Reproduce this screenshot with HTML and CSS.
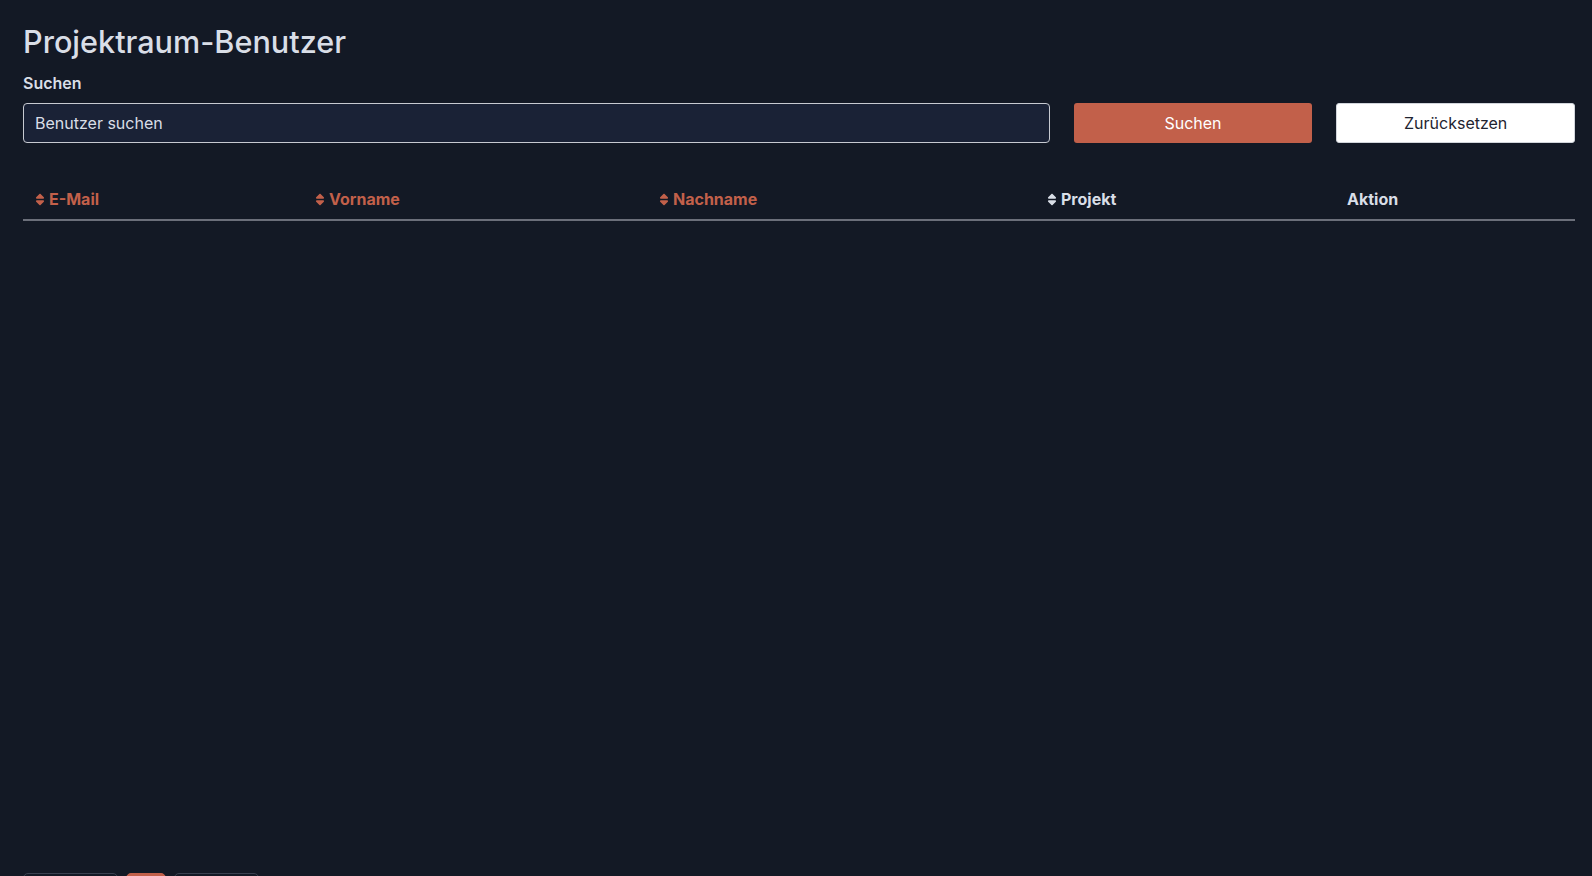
FILE: index.html
```html
<!DOCTYPE html>
<html lang="de">
<head>
<meta charset="utf-8">
<title>Projektraum-Benutzer</title>
<link rel="stylesheet" href="styles.css">
</head>
<body>
<div class="page">
  <h1 class="title">Projektraum-Benutzer</h1>
  <label class="label" for="q">Suchen</label>
  <div class="search">
    <input id="q" class="input" type="text" value="Benutzer suchen">
    <button class="btn btn-primary">Suchen</button>
    <button class="btn btn-light">Zurücksetzen</button>
  </div>
  <div class="table-wrap">
    <table class="table">
      <colgroup>
        <col class="c1"><col class="c2"><col class="c3"><col class="c4"><col class="c5">
      </colgroup>
      <thead>
        <tr>
          <th class="sortable active"><svg class="sort" viewBox="0 0 320 512"><path d="M137.4 41.4c12.5-12.5 32.8-12.5 45.3 0l128 128c9.2 9.2 11.9 22.9 6.9 34.9S301 224 288 224H32c-12.9 0-24.6-7.8-29.6-19.8s-2.2-25.7 6.9-34.9l128-128zm0 429.3l-128-128c-9.2-9.2-11.9-22.9-6.9-34.9S19.1 288 32.1 288h256c12.9 0 24.6 7.8 29.6 19.8s2.2 25.7-6.9 34.9l-128 128c-12.5 12.5-32.8 12.5-45.3 0z"/></svg>E-Mail</th>
          <th class="sortable active"><svg class="sort" viewBox="0 0 320 512"><path d="M137.4 41.4c12.5-12.5 32.8-12.5 45.3 0l128 128c9.2 9.2 11.9 22.9 6.9 34.9S301 224 288 224H32c-12.9 0-24.6-7.8-29.6-19.8s-2.2-25.7 6.9-34.9l128-128zm0 429.3l-128-128c-9.2-9.2-11.9-22.9-6.9-34.9S19.1 288 32.1 288h256c12.9 0 24.6 7.8 29.6 19.8s2.2 25.7-6.9 34.9l-128 128c-12.5 12.5-32.8 12.5-45.3 0z"/></svg>Vorname</th>
          <th class="sortable active"><svg class="sort" viewBox="0 0 320 512"><path d="M137.4 41.4c12.5-12.5 32.8-12.5 45.3 0l128 128c9.2 9.2 11.9 22.9 6.9 34.9S301 224 288 224H32c-12.9 0-24.6-7.8-29.6-19.8s-2.2-25.7 6.9-34.9l128-128zm0 429.3l-128-128c-9.2-9.2-11.9-22.9-6.9-34.9S19.1 288 32.1 288h256c12.9 0 24.6 7.8 29.6 19.8s2.2 25.7-6.9 34.9l-128 128c-12.5 12.5-32.8 12.5-45.3 0z"/></svg>Nachname</th>
          <th class="sortable"><svg class="sort" viewBox="0 0 320 512"><path d="M137.4 41.4c12.5-12.5 32.8-12.5 45.3 0l128 128c9.2 9.2 11.9 22.9 6.9 34.9S301 224 288 224H32c-12.9 0-24.6-7.8-29.6-19.8s-2.2-25.7 6.9-34.9l128-128zm0 429.3l-128-128c-9.2-9.2-11.9-22.9-6.9-34.9S19.1 288 32.1 288h256c12.9 0 24.6 7.8 29.6 19.8s2.2 25.7-6.9 34.9l-128 128c-12.5 12.5-32.8 12.5-45.3 0z"/></svg>Projekt</th>
          <th>Aktion</th>
        </tr>
      </thead>
      <tbody></tbody>
    </table>
  </div>
  <div class="pager">
    <button class="pg pg-wide">Zurück</button>
    <button class="pg pg-current">1</button>
    <button class="pg pg-wide2">Weiter</button>
  </div>
</div>
</body>
</html>
```

FILE: styles.css
```css
html, body {
  margin: 0;
  padding: 0;
  background: #131925;
  height: 100%;
  overflow: hidden;
}
body {
  font-family: Inter, "Noto Sans", sans-serif;
  color: #d9dee7;
}
.page {
  padding: 22px 17px 0 23px;
}
.title {
  margin: 0;
  font-size: 30.6px;
  line-height: 40px;
  font-weight: 500;
  color: #d9dee7;
  letter-spacing: 0;
}
.label {
  display: block;
  margin-top: 9px;
  font-size: 16px;
  line-height: 24px;
  font-weight: 600;
  color: #d9dee7;
}
.search {
  margin-top: 8px;
  display: grid;
  grid-template-columns: repeat(6, 1fr);
  column-gap: 24px;
}
.input {
  grid-column: span 4;
  box-sizing: border-box;
  height: 40px;
  background: #1a2236;
  border: 1px solid #c7cad1;
  border-radius: 4px;
  padding: 0 11px;
  color: #d9dee7;
  font-family: inherit;
  font-size: 16px;
  outline: none;
}
.btn {
  box-sizing: border-box;
  height: 40px;
  border-radius: 3px;
  font-family: inherit;
  font-size: 16px;
  font-weight: 400;
  border: 1px solid transparent;
  cursor: pointer;
}
.btn-primary {
  background: #c2604a;
  color: #ffffff;
}
.btn-light {
  background: #ffffff;
  color: #1f2430;
  border-color: #d1d5db;
}
.table-wrap {
  margin-top: 36px;
  height: 694px;
}
.table {
  width: 100%;
  border-collapse: collapse;
  table-layout: fixed;
}
.c1 { width: 280px; }
.c2 { width: 344px; }
.c3 { width: 388px; }
.c4 { width: 300px; }
.c5 { width: auto; }
.table th {
  text-align: left;
  padding: 8px 12px;
  font-size: 16px;
  line-height: 24px;
  font-weight: 700;
  color: #d9dee7;
  border-bottom: 2px solid #6b6f7a;
  white-space: nowrap;
}
.table th.active {
  color: #c2604a;
}
.sort {
  width: 10px;
  height: 13px;
  fill: currentColor;
  vertical-align: -1px;
  margin-right: 4px;
}
.pager {
  display: flex;
  gap: 8px;
}
.pg {
  height: 36px;
  border-radius: 5px;
  border: 1px solid #3a4150;
  background: transparent;
  color: #d9dee7;
  font-family: inherit;
  font-size: 14px;
}
.pg-wide { width: 95px; }
.pg-wide2 { width: 85px; }
.pg-current {
  width: 40px;
  background: #c2604a;
  border-color: #c2604a;
  color: #fff;
}
```
